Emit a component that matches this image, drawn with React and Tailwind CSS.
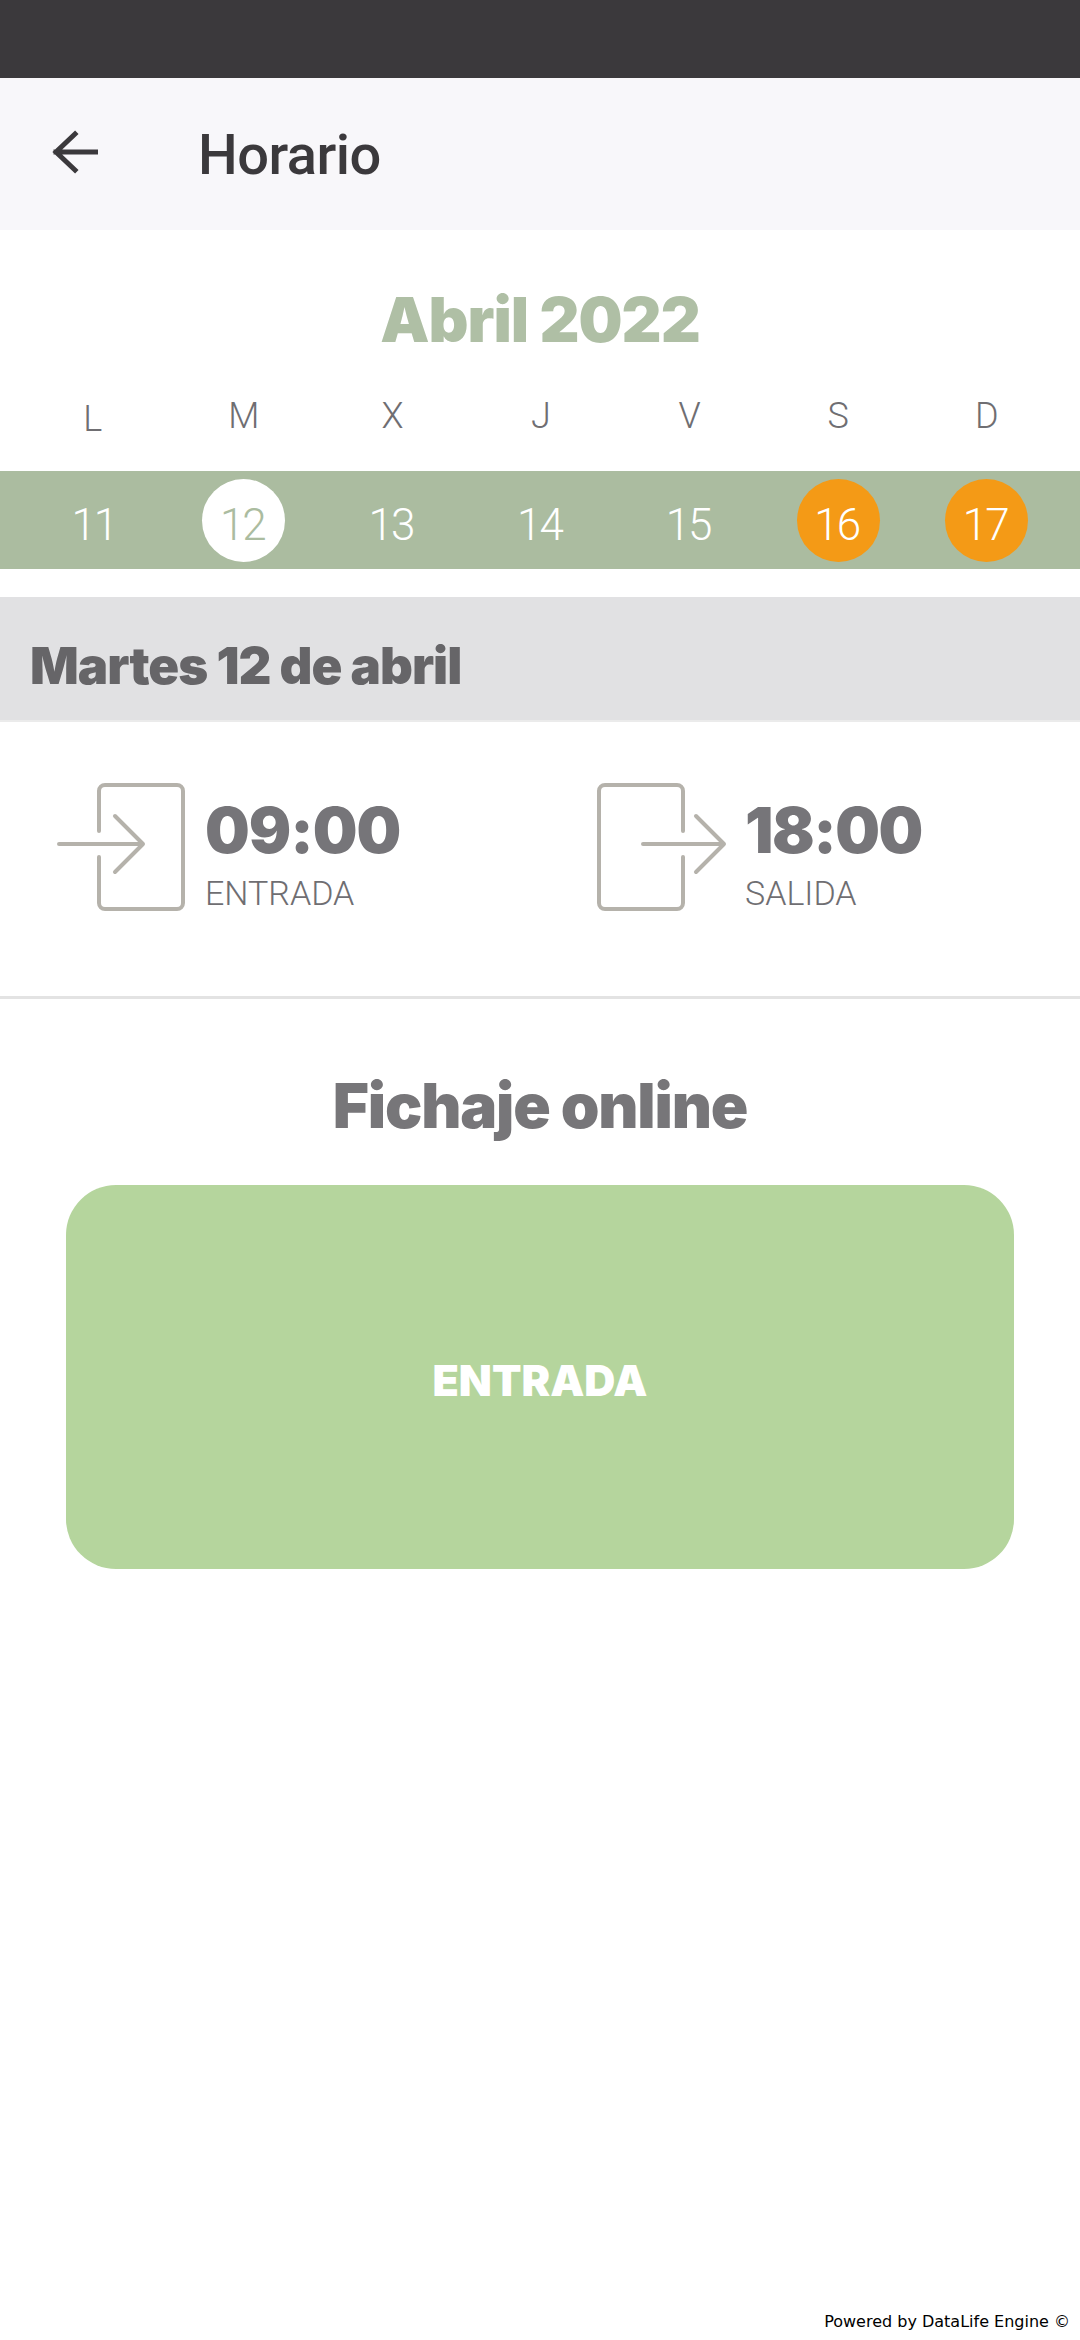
const days = [
  { letter: 'L', num: '11' },
  { letter: 'M', num: '12', today: true },
  { letter: 'X', num: '13' },
  { letter: 'J', num: '14' },
  { letter: 'V', num: '15' },
  { letter: 'S', num: '16', weekend: true },
  { letter: 'D', num: '17', weekend: true },
]

function EntryIcon() {
  return (
    <svg width="130" height="134" viewBox="0 0 130 134" fill="none" stroke="#b5b2ab" strokeWidth="4" strokeLinecap="round" strokeLinejoin="round">
      <path d="M43 52V12a6 6 0 0 1 6-6h72a6 6 0 0 1 6 6v112a6 6 0 0 1-6 6H49a6 6 0 0 1-6-6V78" />
      <path d="M3 65h84M59 37l28 28-28 28" />
    </svg>
  )
}

function ExitIcon() {
  return (
    <svg width="134" height="134" viewBox="0 0 134 134" fill="none" stroke="#b5b2ab" strokeWidth="4" strokeLinecap="round" strokeLinejoin="round">
      <path d="M87 52V12a6 6 0 0 0-6-6H9a6 6 0 0 0-6 6v112a6 6 0 0 0 6 6h72a6 6 0 0 0 6-6V78" />
      <path d="M47 65h81M100 37l28 28-28 28" />
    </svg>
  )
}

export default function App() {
  return (
    <div className="w-[1080px] h-[2340px] bg-white flex flex-col font-['Roboto',sans-serif]">
      <div className="h-[78px] bg-[#3b393c]" />

      <header className="h-[152px] bg-[#f8f7fa] flex items-center">
        <svg className="ml-[52px] mb-[4px]" width="46" height="44" viewBox="0 0 46 44" fill="none" stroke="#3b393c" strokeWidth="5" strokeLinecap="square">
          <path d="M4 22h40M23 4 4 22l19 18" />
        </svg>
        <h1 className="ml-[100px] mt-[1px] text-[56px] font-medium text-[#3b393c] tracking-[-0.5px]">Horario</h1>
      </header>

      <h2 className="mt-[58px] text-center text-[62px] leading-[64px] font-black text-[#afbfa5] font-['Inter',sans-serif] tracking-[-1px]">
        Abril 2022
      </h2>

      <div className="mt-[32px] h-[64px] grid grid-cols-7 pl-[21px] pr-[19px] items-center text-center text-[36px] font-light text-[#6f6e72]">
        {days.map(d => (
          <span key={d.letter} className={d.letter === 'L' ? 'pt-[6px] pr-[5px]' : ''}>{d.letter}</span>
        ))}
      </div>

      <div className="mt-[23px] h-[98px] bg-[#abbca0] grid grid-cols-7 pl-[21px] pr-[19px] items-center justify-items-center">
        {days.map(d => (
          <span
            key={d.num}
            className={`w-[83px] h-[83px] rounded-full flex items-center justify-center text-[44px] font-light tracking-[-2px] pt-[10px] pr-[3px] ${
              d.today ? 'bg-white text-[#abbca0]' : d.weekend ? 'bg-[#f49a16] text-white' : 'text-white'
            }`}
          >
            {d.num}
          </span>
        ))}
      </div>

      <div className="mt-[28px] h-[125px] bg-[#e1e1e3] flex items-center px-[30px] border-b-2 border-[#ebebeb]">
        <h3 className="pt-[16px] text-[51px] font-black text-[#666568] font-['Inter',sans-serif] tracking-[-1px]">Martes 12 de abril</h3>
      </div>

      <div className="h-[277px] flex border-b-[3px] border-[#e3e3e3] pt-[57px]">
        <div className="w-[540px] pl-[56px] flex items-start">
          <EntryIcon />
          <div className="ml-[19px] mt-[21px]">
            <div className="text-[63px] leading-[60px] font-black text-[#767579] font-['Inter',sans-serif] tracking-[-1px]">09:00</div>
            <div className="mt-[13px] text-[34px] leading-[40px] font-light text-[#6f6e72]">ENTRADA</div>
          </div>
        </div>
        <div className="flex-1 pl-[56px] flex items-start">
          <ExitIcon />
          <div className="ml-[15px] mt-[21px]">
            <div className="text-[63px] leading-[60px] font-black text-[#767579] font-['Inter',sans-serif] tracking-[-1.5px]">18:00</div>
            <div className="mt-[13px] text-[34px] leading-[40px] font-light text-[#6f6e72]">SALIDA</div>
          </div>
        </div>
      </div>

      <h2 className="mt-[72px] text-center text-[62px] leading-[70px] font-black text-[#777679] font-['Inter',sans-serif] tracking-[-1.2px]">
        Fichaje online
      </h2>

      <button className="mt-[44px] mx-[66px] h-[384px] rounded-[50px] bg-[#b5d59d] text-white text-[43px] font-black font-['Inter',sans-serif] pt-[6px]">
        ENTRADA
      </button>

      <div className="mt-auto mb-[8px] pr-[10px] text-right text-[16px] leading-[20px] text-black font-['DejaVu_Sans',sans-serif]">
        Powered by DataLife Engine ©
      </div>
    </div>
  )
}
